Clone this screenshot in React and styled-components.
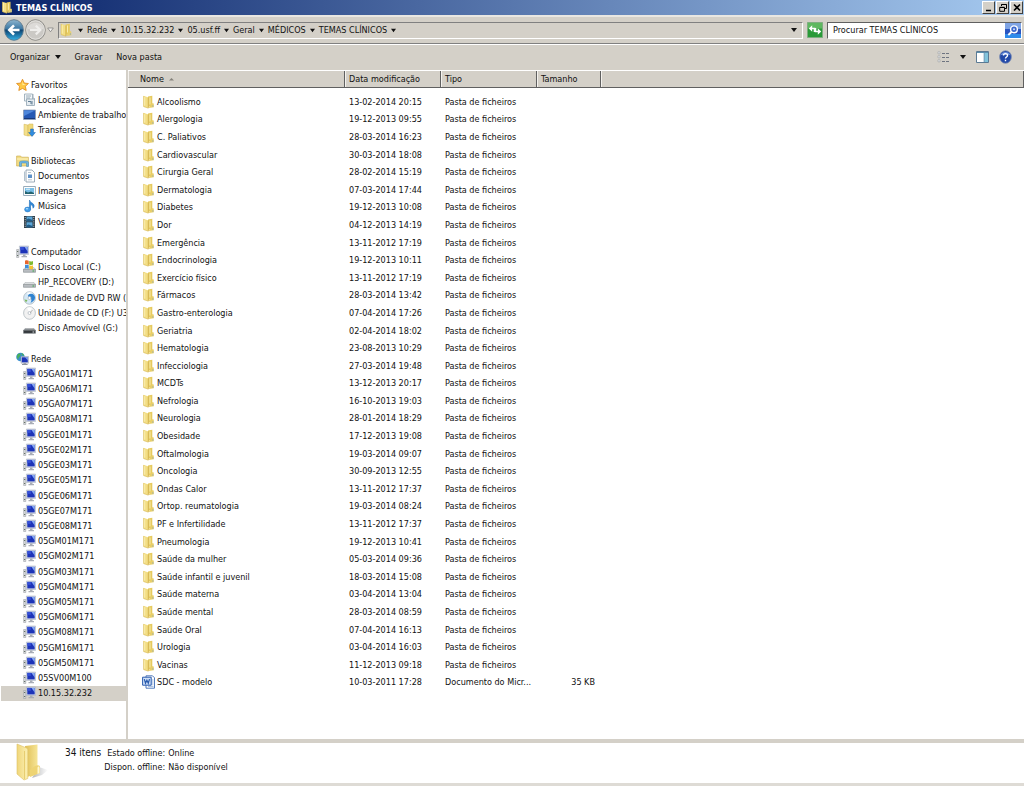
import React from 'react';
import styled, { createGlobalStyle } from 'styled-components';

const GlobalStyle = createGlobalStyle`
  * {
    box-sizing: border-box;
  }
  body {
    margin: 0;
    background: #ffffff;
  }
  button, input, table {
    font: inherit;
    color: inherit;
  }
  ul {
    list-style: none;
    margin: 0;
    padding: 0;
  }
  a {
    color: inherit;
    text-decoration: none;
  }
`

const Window = styled.div`
  height: 100vh;
  min-height: 700px;
  display: flex;
  flex-direction: column;
  padding-bottom: 1px;
  background: #ffffff;
  color: #111111;
  font-family: "DejaVu Sans Condensed", "DejaVu Sans", sans-serif;
  font-size: 9px;
  line-height: 12px;
  overflow: hidden;
`

const TitleBar = styled.header`
  flex: none;
  height: 15px;
  display: flex;
  align-items: center;
  gap: 3px;
  padding: 0 1px;
  background: linear-gradient(90deg, #0a246a, #a6caf0);
`

const Title = styled.h1`
  flex: 1;
  margin: 0;
  color: #ffffff;
  font-size: 9px;
  font-weight: 700;
`

const WindowButtons = styled.div`
  display: flex;
  gap: 1px;
`

const WindowButton = styled.button`
  width: 13px;
  height: 13px;
  padding: 0;
  display: flex;
  justify-content: center;
  align-items: center;
  background: #d4d0c8;
  border: 1px solid;
  border-color: #ffffff #404040 #404040 #ffffff;
`

const AddressRow = styled.div`
  flex: none;
  height: 29px;
  display: flex;
  align-items: center;
  gap: 4px;
  padding: 0 2px 0 4px;
  background: #d4d0c8;
  border-top: 2px solid #e9e7e2;
  border-bottom: 1px solid #808080;
`

const NavButtons = styled.div`
  display: flex;
  align-items: center;
  gap: 1px;
`

const PlainButton = styled.button`
  display: flex;
  align-items: center;
  gap: ${({ $gap }) => $gap || 0}px;
  padding: 0;
  border: none;
  background: none;
  white-space: nowrap;
`

const AddressBox = styled.nav`
  flex: 1;
  height: 17px;
  display: flex;
  align-items: center;
  padding: 0 5px 0 1px;
  border: 1px solid;
  border-color: #808080 #ffffff #ffffff #808080;
`

const Crumbs = styled.div`
  flex: 1;
  display: flex;
  align-items: center;
  gap: 4px;
  padding-left: 6px;
`

const SearchBox = styled.div`
  width: 195px;
  height: 17px;
  display: flex;
  border: 1px solid;
  border-color: #606060 #ffffff #ffffff #606060;
  background: #ffffff;
`

const SearchInput = styled.input`
  flex: 1;
  min-width: 0;
  padding: 0 5px;
  border: none;
  outline: none;
  background: #ffffff;
  &::placeholder {
    color: #111111;
    opacity: 1;
  }
`

const Toolbar = styled.div`
  flex: none;
  height: 26px;
  display: flex;
  align-items: center;
  gap: 14px;
  padding: 0 12px 2px 10px;
  background: #d4d0c8;
  border-top: 1px solid #ffffff;
`

const ToolbarRight = styled.div`
  margin-left: auto;
  display: flex;
  align-items: center;
  gap: 10px;
`

const Content = styled.div`
  flex: 1;
  min-height: 0;
  display: flex;
`

const Sidebar = styled.nav`
  flex: none;
  width: 128px;
  display: flex;
  flex-direction: column;
  padding: 7px 0 38px 1px;
  border-right: 2px solid #d4d0c8;
  overflow: hidden;
`

const Group = styled.ul`
  flex: ${({ $rows }) => $rows} 0 0;
  min-height: 0;
  display: flex;
  flex-direction: column;
  &:not(:last-child)::after {
    content: '';
    flex: 1 0 0;
  }
`

const TreeItem = styled.li`
  flex: 1 0 0;
  min-height: 0;
  display: flex;
  background: ${({ $selected }) => ($selected ? '#d4d0c8' : 'transparent')};
`

const TreeLink = styled.a`
  flex: 1;
  display: flex;
  align-items: center;
  gap: 2px;
  padding-left: ${({ $level }) => ($level ? 22 : 15)}px;
  white-space: nowrap;
  svg {
    flex: none;
  }
`

const FileTable = styled.table`
  flex: 1;
  min-width: 0;
  display: flex;
  flex-direction: column;
  background: #ffffff;
`

const TableHead = styled.thead`
  flex: none;
  display: block;
`

const HeadRow = styled.tr`
  height: 18px;
  display: grid;
  grid-template-columns: 217px 96px 96px 64px 1fr;
  background: #d4d0c8;
  border-top: 1px solid #ffffff;
  border-bottom: 1px solid #606060;
`

const HeadCell = styled.th`
  display: flex;
  align-items: center;
  gap: 5px;
  padding: 0 0 0 ${({ $first }) => ($first ? 11 : 3)}px;
  border-right: 1px solid #606060;
  border-left: 1px solid #f4f2ee;
  font-weight: 400;
`

const TableBody = styled.tbody`
  flex: 1;
  min-height: 0;
  display: flex;
  flex-direction: column;
  padding: 5px 0 48px;
`

const FileRow = styled.tr`
  flex: 1 0 0;
  min-height: 0;
  display: grid;
  grid-template-columns: 217px 96px 96px 58px 1fr;
  align-items: center;
`

const Cell = styled.td`
  display: flex;
  align-items: center;
  justify-content: ${({ $right }) => ($right ? 'flex-end' : 'flex-start')};
  gap: 2px;
  padding: 0 0 0 ${({ $first }) => ($first ? 14 : 4)}px;
  white-space: nowrap;
`

const Details = styled.footer`
  flex: none;
  height: 47px;
  display: flex;
  gap: 16px;
  padding-left: 15px;
  background: #ffffff;
  border-top: 4px solid #d4d0c8;
  border-bottom: 3px solid #dedbd5;
`

const Count = styled.div`
  padding-top: 3px;
  font-size: 10px;
  line-height: 14px;
`

const Facts = styled.dl`
  margin: 0 0 0 -13px;
  padding-top: 3px;
  display: grid;
  grid-template-columns: auto auto;
  grid-auto-rows: 14px;
  column-gap: 3px;
  align-items: center;
  dt {
    text-align: right;
  }
  dd {
    margin: 0;
  }
`

const Arrow = ({ size = 5 }) => (
  <svg width={size} height={size} viewBox="0 0 6 6" aria-hidden="true">
    <path d="M0 1h6L3 5z" fill="#111" />
  </svg>
)

const FolderIcon = ({ width = 12, height = 14 }) => (
  <svg width={width} height={height} viewBox="0 0 12 14" aria-hidden="true">
    <path d="M5.500 1.500L9.800.8v9.700L5.500 12z" fill="#e6ca5e" />
    <path d="M9.300 8.500c1.500-.5 2 0 2 1.200v2.500L6 12.900z" fill="#e9cf69" />
    <path d="M1 .8l4.300 1.400c.5.200.7.5.7 1v10L1 11.600z" fill="#f3de84" />
    <path d="M5.800 2.500v10.700" stroke="#c9a640" strokeWidth=".7" />
    <path d="M1.200 1v10.600l4.400 1.500" fill="none" stroke="#d6b850" strokeWidth=".6" />
    <path d="M2.200 2.200v8.500M7.500 2.500v7" stroke="#fbf0b8" strokeWidth=".9" />
    <path d="M10.400 10v2" stroke="#86a9b8" strokeWidth=".6" />
  </svg>
)

const BigFolderIcon = () => (
  <svg width="34" height="39" viewBox="0 0 34 39" aria-hidden="true">
    <defs>
      <linearGradient id="front" x1="0" x2="1">
        <stop offset="0" stopColor="#f0d679" />
        <stop offset="1" stopColor="#fbf0b4" />
      </linearGradient>
      <linearGradient id="back" x1="0" x2="1">
        <stop offset="0" stopColor="#e0bf55" />
        <stop offset="1" stopColor="#f6e597" />
      </linearGradient>
      <linearGradient id="shade" x1="0" x2="1">
        <stop offset="0" stopColor="#b5b7ba" />
        <stop offset="1" stopColor="#ffffff" />
      </linearGradient>
    </defs>
    <path d="M24 24l9 3-6 5-10 3z" fill="url(#shade)" />
    <path d="M10 3l12.500-1.500v29L12 34z" fill="url(#back)" />
    <path d="M20 23c3-1.500 5-1 5 1.500v5.500l-10 4V27z" fill="#eed473" />
    <path d="M22.500 25c0-2 2-2 2 0v5l-2 1z" fill="#fff7cf" />
    <path d="M2 1l9.500 4c1 .5 1.300 1.200 1.300 2.500v28L9 37 2 31z" fill="url(#front)" stroke="#dcc065" strokeWidth=".6" />
    <path d="M9.500 8v28" stroke="#e2c565" strokeWidth=".8" />
  </svg>
)

const StarIcon = () => (
  <svg width="13" height="14" viewBox="0 0 14 14" aria-hidden="true">
    <path d="M7 .8l1.900 4.100 4.500.5-3.300 3 .9 4.500L7 10.700l-4 2.200.9-4.500-3.300-3 4.500-.5z" fill="#ffc843" stroke="#e08a1e" strokeWidth=".9" />
    <path d="M7 3l1 3 2.500.4-3.500 1z" fill="#fff0a8" />
  </svg>
)

const PlacesIcon = () => (
  <svg width="13" height="14" viewBox="0 0 13 14" aria-hidden="true">
    <path d="M1.500 1h8v7h-8z" fill="#f4f7f9" stroke="#8fa3b1" strokeWidth=".8" />
    <path d="M3 3h5M3 5h4M5 7h3" stroke="#7d94a6" strokeWidth=".8" />
    <path d="M3.500 6h8v6.500h-8z" fill="#e4ebf0" stroke="#8fa3b1" strokeWidth=".8" />
    <path d="M5 8.500h3v2.500M9 8v3.500" fill="none" stroke="#5e7c94" />
    <path d="M10 1v4l2 1" fill="none" stroke="#a3b2bd" />
  </svg>
)

const DesktopIcon = () => (
  <svg width="13" height="14" viewBox="0 0 13 14" aria-hidden="true">
    <path d="M.5 2h12v9.500H.5z" fill="#2558b4" stroke="#8b9bb4" strokeWidth=".8" />
    <path d="M1 2.500h11L1 8z" fill="#4d86db" />
    <path d="M1 10.500h11" stroke="#17397b" />
  </svg>
)

const DownloadsIcon = () => (
  <svg width="13" height="14" viewBox="0 0 13 14" aria-hidden="true">
    <path d="M1 1.200L5 2v11L1 12z" fill="#f3df8c" stroke="#d3b452" strokeWidth=".5" />
    <path d="M5 2l1.300-1H10v11.500L5 13z" fill="#f0d878" stroke="#d3b452" strokeWidth=".5" />
    <path d="M7.600 6h2.800v3.500h2L9 13.400 5.600 9.500h2z" fill="#2f8de0" stroke="#1a63b0" strokeWidth=".5" />
  </svg>
)

const LibraryIcon = () => (
  <svg width="13" height="14" viewBox="0 0 13 14" aria-hidden="true">
    <path d="M.6 2h4l1 1.200h6.800V12H.6z" fill="#f2dc83" stroke="#caa847" strokeWidth=".6" />
    <path d="M1 5h11" stroke="#fff5c4" />
    <path d="M3.500 12.500V8C3.500 6.500 12.500 6.500 12.500 8v4.500h-2V9h-5v3.500z" fill="#6fb5e2" stroke="#3f86b9" strokeWidth=".5" />
  </svg>
)

const DocumentIcon = () => (
  <svg width="13" height="14" viewBox="0 0 13 14" aria-hidden="true">
    <path d="M3 1h6l2.500 2.500V13H3z" fill="#ffffff" stroke="#8397a8" strokeWidth=".8" />
    <path d="M1.500 2.500V12" stroke="#b3c2ce" />
    <path d="M5 5.500h4V9H5z" fill="#5e92c9" />
    <path d="M5 10.800h4M5 3.500h3" stroke="#98abba" strokeWidth=".7" />
  </svg>
)

const ImageIcon = () => (
  <svg width="13" height="14" viewBox="0 0 13 14" aria-hidden="true">
    <path d="M.6 2.500h11.800v9H.6z" fill="#ffffff" stroke="#7f97a8" strokeWidth=".8" />
    <path d="M2 4h9v6H2z" fill="#77bde6" />
    <path d="M2 10V7l3 1.500L8 7.500 11 9v1z" fill="#23626e" />
    <path d="M3 5.200h4" stroke="#e6f5fd" />
  </svg>
)

const MusicIcon = () => (
  <svg width="13" height="14" viewBox="0 0 13 14" aria-hidden="true">
    <path d="M6.500 1c.3 2.500 4 3 4.500 5.200.3 1.200-.2 2.300-1 3C10.200 7 8.500 5.600 7.500 5.600V10.500H6.300z" fill="#2f86d6" stroke="#2470b8" strokeWidth=".6" />
    <ellipse cx="4.600" cy="10.500" rx="3" ry="2.400" fill="#3f9be8" stroke="#2470b8" strokeWidth=".5" />
    <ellipse cx="4" cy="9.800" rx="1.300" ry=".8" fill="#a9dcff" />
  </svg>
)

const VideoIcon = () => (
  <svg width="13" height="14" viewBox="0 0 13 14" aria-hidden="true">
    <path d="M1 1h11v12H1z" fill="#2f3e49" />
    <path d="M3.500 1.500h6v4.800h-6zM3.500 7.300h6v5h-6z" fill="#5ba6d8" />
    <path d="M3.500 4.500l2-1 4 1.500v1.300h-6zM3.500 10.500l2-1 4 1.500v1.300h-6z" fill="#235c86" />
    <path d="M2.200 2v10M10.800 2v10" stroke="#cdd6dc" strokeWidth=".9" strokeDasharray="1 1.200" />
  </svg>
)

const ComputerIcon = () => (
  <svg width="13" height="14" viewBox="0 0 13 14" aria-hidden="true">
    <path d="M.6 4.500h2.200v8H.6z" fill="#d6d8dc" stroke="#96999f" strokeWidth=".5" />
    <path d="M1.200 6.500h1M1.200 10.500h1" stroke="#4a5a49" />
    <path d="M3.400 1h9.200v8.500H3.400z" fill="#d4dae8" stroke="#a3aabb" strokeWidth=".5" />
    <path d="M4.300 1.900h7.400v6.500H4.300z" fill="#1d34b8" />
    <path d="M4.300 1.900h3.500v3H4.300z" fill="#3550d6" />
    <path d="M8.500 1.900h3.200v4.500z" fill="#86a8f4" />
    <path d="M7 9.500h2.500v1.600H11v1.200H5.500v-1.200H7z" fill="#a9adb6" />
  </svg>
)

const NetworkIcon = () => (
  <svg width="13" height="14" viewBox="0 0 13 14" aria-hidden="true">
    <circle cx="4.500" cy="5" r="4.300" fill="#3b8fd0" />
    <path d="M2 2c2-1.500 3 0 2.500 1.500S2 5 2.500 7.500C1 7 .3 4 2 2zM5.500 1c2 .5 2.500 2 2.500 3L6 3z" fill="#48b05a" />
    <path d="M5 4.500h7.600v6.700H5z" fill="#d4dae8" stroke="#9298a6" strokeWidth=".5" />
    <path d="M5.800 5.300h6v5h-6z" fill="#1d34b8" />
    <path d="M9 5.300h2.800v3z" fill="#86a8f4" />
    <path d="M7.500 11.200h2.600v.8h1.500v1H6v-1h1.500z" fill="#8e939d" />
  </svg>
)

const DriveIcon = ({ windows, dark }) => (
  <svg width="13" height="14" viewBox="0 0 13 14" aria-hidden="true">
    <path d="M2 7.500h9l1.500 2H.5z" fill={dark ? '#8b8f94' : '#e6e8ea'} stroke="#94999e" strokeWidth=".4" />
    <path d="M.5 9.300h12v3H.5z" fill={dark ? '#34383c' : '#b9bdc1'} stroke="#73787d" strokeWidth=".5" />
    <path d="M9.500 11h1.700" stroke={dark ? '#d6dadd' : '#3ba84b'} />
    {windows && (
      <>
        <path d="M2 .8c1.600-.9 2.700-.5 3.700 0v3.700c-1.200-.6-2.400-.7-3.700 0z" fill="#e8662a" />
        <path d="M6.200 1c1.300.7 2.600.5 3.800-.1v3.700c-1.300.7-2.600.5-3.800.1z" fill="#7fba2f" />
        <path d="M2 5.100c1.300-.6 2.500-.5 3.700 0v3.600c-1.200-.6-2.400-.7-3.700 0z" fill="#3d8ed8" />
        <path d="M6.200 5.300c1.300.7 2.600.5 3.800-.1v3.700c-1.300.7-2.600.5-3.800.1z" fill="#f5c332" />
      </>
    )}
  </svg>
)

const DiscIcon = ({ blue }) => (
  <svg width="13" height="14" viewBox="0 0 13 14" aria-hidden="true">
    <ellipse cx="6.500" cy="7" rx="5.900" ry="6.300" fill={blue ? '#d5e8f6' : '#f2f2f2'} stroke="#a8b1b8" strokeWidth=".7" />
    <path d="M6.500 7L4 1.800A6 6 0 0 1 9 1.800z" fill="#ffffff" />
    {blue && <path d="M5 4c3-2.500 7-.5 7 2.500S9.500 10.500 7.500 12C9 9.500 9 7.500 5.500 6.500z" fill="#2f83d0" />}
    {blue && <path d="M1.500 8.500l3 .5-1.500 2.500z" fill="#7db85a" />}
    <circle cx="6.500" cy="7" r="1.500" fill="#ffffff" stroke="#9da8b1" strokeWidth=".6" />
    {!blue && <path d="M7 7l2.500-3" stroke="#a9a9a9" strokeWidth=".8" />}
  </svg>
)

const WordIcon = () => (
  <svg width="13" height="14" viewBox="0 0 13 14" aria-hidden="true">
    <path d="M4 .8h6.500l2 2V13.200H4z" fill="#ffffff" stroke="#3f6cb4" strokeWidth=".9" />
    <path d="M9.500 5h2M9.500 7h2M9.500 9h2M6 11.300h5.500" stroke="#7c9dd2" strokeWidth=".8" />
    <path d="M.6 2.200h8.600v8H.6z" fill="#cfe0f7" stroke="#2b5cae" />
    <path d="M2.300 4.200l1.200 4 1.400-3 1.400 3 1.200-4" fill="none" stroke="#2b5cae" strokeWidth="1.200" />
  </svg>
)

const BackIcon = () => (
  <svg width="20" height="22" viewBox="0 0 20 22" aria-hidden="true">
    <defs>
      <linearGradient id="nav" x1="0" y1="0" x2="0" y2="1">
        <stop offset="0" stopColor="#8fb6cf" />
        <stop offset=".45" stopColor="#3a77a3" />
        <stop offset=".5" stopColor="#0d4270" />
        <stop offset="1" stopColor="#35b2e6" />
      </linearGradient>
    </defs>
    <ellipse cx="10" cy="11" rx="9.400" ry="10.300" fill="url(#nav)" stroke="#5c788c" strokeWidth=".9" />
    <path d="M15.500 11H6M10 6.300L5.300 11l4.700 4.700" fill="none" stroke="#ffffff" strokeWidth="2.600" />
  </svg>
)

const ForwardIcon = () => (
  <svg width="21" height="22" viewBox="0 0 21 22" aria-hidden="true">
    <ellipse cx="10.500" cy="11" rx="9.800" ry="10.300" fill="#cbc9c5" stroke="#85837f" strokeWidth=".9" />
    <ellipse cx="10.500" cy="11" rx="8.800" ry="9.200" fill="none" stroke="#e6e4e1" strokeWidth=".9" />
    <path d="M2.500 10C4 1.500 17 1.500 18.500 10c-4 1-12 1-16 0z" fill="#dddbd8" />
    <path d="M5 11h9.500M10.800 6.600l4.500 4.400-4.500 4.400" fill="none" stroke="#efeeec" strokeWidth="2.200" />
  </svg>
)

const HistoryIcon = () => (
  <svg width="7" height="6" viewBox="0 0 7 6" aria-hidden="true">
    <path d="M.7 1h5.600L3.500 4.800z" fill="#f5f4f2" stroke="#777" strokeWidth=".7" />
  </svg>
)

const RefreshIcon = () => (
  <svg width="16" height="16" viewBox="0 0 16 16" aria-hidden="true">
    <path d="M.5.5h15v15H.5z" fill="#2a9a38" stroke="#7fae80" />
    <path d="M1 1h14v5.500H1z" fill="#5fb860" />
    <path d="M7.500 10V6.500H4.500" fill="none" stroke="#ffffff" strokeWidth="1.600" />
    <path d="M5.200 3.300v6.400L1.800 6.500z" fill="#ffffff" />
    <path d="M8.500 6V9.500h3" fill="none" stroke="#ffffff" strokeWidth="1.600" />
    <path d="M10.800 6.300v6.400l3.400-3.200z" fill="#ffffff" />
  </svg>
)

const SearchIcon = () => (
  <svg width="16" height="15" viewBox="0 0 16 15" aria-hidden="true">
    <path d="M0 0h16v15H0z" fill="#2a55c0" />
    <path d="M0 0h16v6H0z" fill="#7fa4e4" />
    <path d="M0 11h16v4H0z" fill="#2f8bea" />
    <circle cx="9" cy="6.300" r="3.400" fill="#3c68cc" stroke="#ffffff" strokeWidth="1.400" />
    <circle cx="9" cy="6.300" r="1" fill="#cfe0ff" />
    <path d="M6.500 9L3.300 12" stroke="#ffffff" strokeWidth="1.900" />
  </svg>
)

const ViewIcon = () => (
  <svg width="13" height="12" viewBox="0 0 13 12" aria-hidden="true">
    <path d="M1 .8h2v2H1zM1 4.800h2v2H1zM1 8.800h2v2H1z" fill="#f2f2f2" stroke="#9a9da3" strokeWidth=".6" />
    <path d="M5 2.500h3M9 2.500h3M5 6.500h3M9 6.500h3M5 10.500h3M9 10.500h3" stroke="#6e7480" />
  </svg>
)

const PaneIcon = () => (
  <svg width="13" height="12" viewBox="0 0 13 12" aria-hidden="true">
    <path d="M.5.5h12v11H.5z" fill="#ffffff" stroke="#5b7a94" />
    <path d="M8.500 1H12v10H8.500z" fill="#82c4dc" />
    <path d="M8.200 1v10M1 1.500h11" stroke="#5b8fae" />
  </svg>
)

const HelpIcon = () => (
  <svg width="13" height="14" viewBox="0 0 13 14" aria-hidden="true">
    <ellipse cx="6.500" cy="7" rx="5.900" ry="6.300" fill="#2148a8" stroke="#7f8fb4" strokeWidth=".8" />
    <path d="M1.800 5C3 1 10 1 11.200 5z" fill="#6f92dc" />
    <path d="M4.500 5.500C4.500 3 8.500 3 8.500 5.400 8.500 7 6.500 7 6.500 8.600M6.500 9.800v1.400" fill="none" stroke="#ffffff" strokeWidth="1.400" />
  </svg>
)

const crumbs = ['Rede', '10.15.32.232', '05.usf.ff', 'Geral', 'MÉDICOS', 'TEMAS CLÍNICOS']

const hosts = [
  '05GA01M171', '05GA06M171', '05GA07M171', '05GA08M171',
  '05GE01M171', '05GE02M171', '05GE03M171', '05GE05M171', '05GE06M171', '05GE07M171', '05GE08M171',
  '05GM01M171', '05GM02M171', '05GM03M171', '05GM04M171', '05GM05M171', '05GM06M171', '05GM08M171',
  '05GM16M171', '05GM50M171', '05SV00M100', '10.15.32.232',
]

const groups = [
  {
    name: 'Favoritos',
    icon: <StarIcon />,
    items: [
      ['Localizações', <PlacesIcon />],
      ['Ambiente de trabalho', <DesktopIcon />],
      ['Transferências', <DownloadsIcon />],
    ],
  },
  {
    name: 'Bibliotecas',
    icon: <LibraryIcon />,
    items: [
      ['Documentos', <DocumentIcon />],
      ['Imagens', <ImageIcon />],
      ['Música', <MusicIcon />],
      ['Vídeos', <VideoIcon />],
    ],
  },
  {
    name: 'Computador',
    icon: <ComputerIcon />,
    items: [
      ['Disco Local (C:)', <DriveIcon windows />],
      ['HP_RECOVERY (D:)', <DriveIcon />],
      ['Unidade de DVD RW (E', <DiscIcon blue />],
      ['Unidade de CD (F:) U3', <DiscIcon />],
      ['Disco Amovível (G:)', <DriveIcon dark />],
    ],
  },
  {
    name: 'Rede',
    icon: <NetworkIcon />,
    items: hosts.map((host) => [host, <ComputerIcon />]),
  },
]

const folders = [
  ['Alcoolismo', '13-02-2014 20:15'],
  ['Alergologia', '19-12-2013 09:55'],
  ['C. Paliativos', '28-03-2014 16:23'],
  ['Cardiovascular', '30-03-2014 18:08'],
  ['Cirurgia Geral', '28-02-2014 15:19'],
  ['Dermatologia', '07-03-2014 17:44'],
  ['Diabetes', '19-12-2013 10:08'],
  ['Dor', '04-12-2013 14:19'],
  ['Emergência', '13-11-2012 17:19'],
  ['Endocrinologia', '19-12-2013 10:11'],
  ['Exercício físico', '13-11-2012 17:19'],
  ['Fármacos', '28-03-2014 13:42'],
  ['Gastro-enterologia', '07-04-2014 17:26'],
  ['Geriatria', '02-04-2014 18:02'],
  ['Hematologia', '23-08-2013 10:29'],
  ['Infecciologia', '27-03-2014 19:48'],
  ['MCDTs', '13-12-2013 20:17'],
  ['Nefrologia', '16-10-2013 19:03'],
  ['Neurologia', '28-01-2014 18:29'],
  ['Obesidade', '17-12-2013 19:08'],
  ['Oftalmologia', '19-03-2014 09:07'],
  ['Oncologia', '30-09-2013 12:55'],
  ['Ondas Calor', '13-11-2012 17:37'],
  ['Ortop. reumatologia', '19-03-2014 08:24'],
  ['PF e Infertilidade', '13-11-2012 17:37'],
  ['Pneumologia', '19-12-2013 10:41'],
  ['Saúde da mulher', '05-03-2014 09:36'],
  ['Saúde infantil e juvenil', '18-03-2014 15:08'],
  ['Saúde materna', '03-04-2014 13:04'],
  ['Saúde mental', '28-03-2014 08:59'],
  ['Saúde Oral', '07-04-2014 16:13'],
  ['Urologia', '03-04-2014 16:03'],
  ['Vacinas', '11-12-2013 09:18'],
]

export default function App() {
  return (
    <Window>
      <GlobalStyle />
      <TitleBar>
        <FolderIcon width={12} height={13} />
        <Title>TEMAS CLÍNICOS</Title>
        <WindowButtons>
          <WindowButton aria-label="Minimizar">
            <svg width="8" height="9" viewBox="0 0 8 9"><path d="M1 7.500h5" stroke="#000" strokeWidth="1.500" /></svg>
          </WindowButton>
          <WindowButton aria-label="Restaurar">
            <svg width="8" height="9" viewBox="0 0 8 9">
              <path d="M2.500 3V1.500h5v4H6M.7 4.500h4.800v3.800H.7zM2.500 1.500h5M.7 4.300h4.800" fill="none" stroke="#000" />
            </svg>
          </WindowButton>
          <WindowButton aria-label="Fechar">
            <svg width="8" height="9" viewBox="0 0 8 9"><path d="M1 1.500l6 6M7 1.500l-6 6" stroke="#000" strokeWidth="1.600" /></svg>
          </WindowButton>
        </WindowButtons>
      </TitleBar>

      <AddressRow>
        <NavButtons>
          <PlainButton aria-label="Retroceder"><BackIcon /></PlainButton>
          <PlainButton aria-label="Avançar"><ForwardIcon /></PlainButton>
          <PlainButton aria-label="Páginas recentes"><HistoryIcon /></PlainButton>
        </NavButtons>
        <AddressBox>
          <FolderIcon />
          <Crumbs>
            <Arrow />
            {crumbs.map((crumb) => (
              <PlainButton key={crumb} $gap={4}>
                {crumb}
                <Arrow />
              </PlainButton>
            ))}
          </Crumbs>
          <PlainButton aria-label="Localizações anteriores"><Arrow size={6} /></PlainButton>
        </AddressBox>
        <PlainButton aria-label="Atualizar"><RefreshIcon /></PlainButton>
        <SearchBox>
          <SearchInput aria-label="Procurar" placeholder="Procurar TEMAS CLÍNICOS" />
          <PlainButton aria-label="Iniciar procura"><SearchIcon /></PlainButton>
        </SearchBox>
      </AddressRow>

      <Toolbar>
        <PlainButton $gap={5}>Organizar <Arrow size={6} /></PlainButton>
        <PlainButton>Gravar</PlainButton>
        <PlainButton>Nova pasta</PlainButton>
        <ToolbarRight>
          <PlainButton aria-label="Mudar vista" $gap={10}><ViewIcon /><Arrow size={6} /></PlainButton>
          <PlainButton aria-label="Painel de pré-visualização"><PaneIcon /></PlainButton>
          <PlainButton aria-label="Ajuda"><HelpIcon /></PlainButton>
        </ToolbarRight>
      </Toolbar>

      <Content>
        <Sidebar>
          {groups.map((group, i) => (
            <Group key={group.name} $rows={group.items.length + (i < groups.length - 1 ? 2 : 1)}>
              <TreeItem>
                <TreeLink href="#">{group.icon}{group.name}</TreeLink>
              </TreeItem>
              {group.items.map(([name, icon]) => (
                <TreeItem key={name} $selected={name === '10.15.32.232'}>
                  <TreeLink href="#" $level={1}>{icon}{name}</TreeLink>
                </TreeItem>
              ))}
            </Group>
          ))}
        </Sidebar>

        <FileTable>
          <TableHead>
            <HeadRow>
              <HeadCell $first>
                Nome
                <svg width="5" height="4" viewBox="0 0 5 4"><path d="M0 3.500L2.500 1 5 3.500z" fill="#85827c" /></svg>
              </HeadCell>
              <HeadCell>Data modificação</HeadCell>
              <HeadCell>Tipo</HeadCell>
              <HeadCell>Tamanho</HeadCell>
              <HeadCell aria-hidden="true" />
            </HeadRow>
          </TableHead>
          <TableBody>
            {folders.map(([name, date]) => (
              <FileRow key={name}>
                <Cell $first><FolderIcon width={13} />{name}</Cell>
                <Cell>{date}</Cell>
                <Cell>Pasta de ficheiros</Cell>
                <Cell />
              </FileRow>
            ))}
            <FileRow>
              <Cell $first><WordIcon />SDC - modelo</Cell>
              <Cell>10-03-2011 17:28</Cell>
              <Cell>Documento do Micr...</Cell>
              <Cell $right>35 KB</Cell>
            </FileRow>
          </TableBody>
        </FileTable>
      </Content>

      <Details>
        <BigFolderIcon />
        <Count>34 itens</Count>
        <Facts>
          <dt>Estado offline:</dt>
          <dd>Online</dd>
          <dt>Dispon. offline:</dt>
          <dd>Não disponível</dd>
        </Facts>
      </Details>
    </Window>
  )
}
